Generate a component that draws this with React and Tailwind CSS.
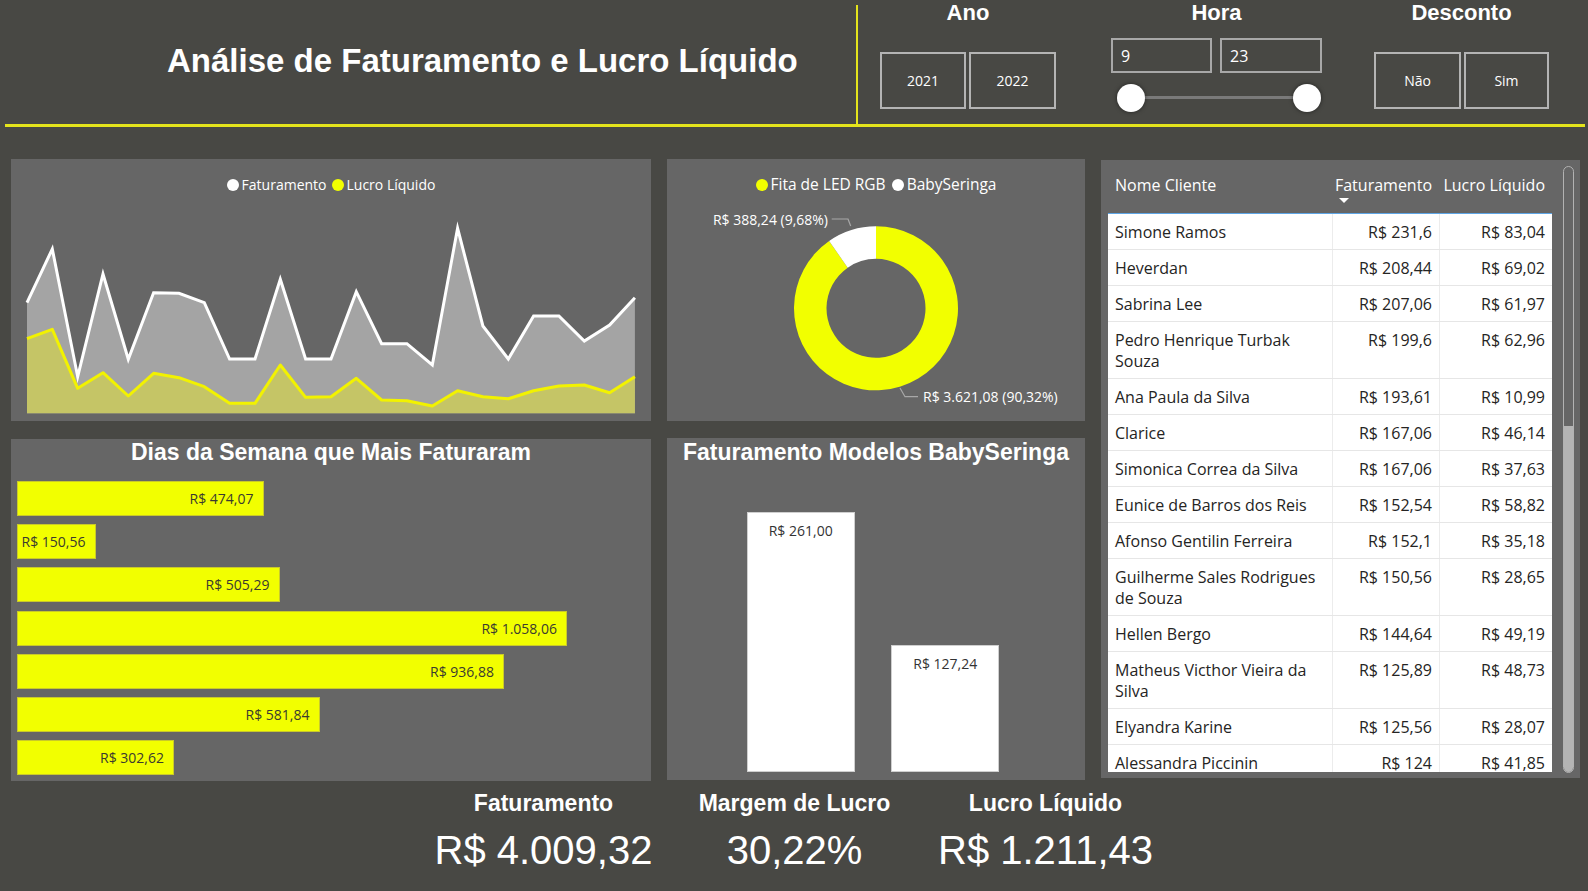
import React from 'react';

const ARIAL = "font-['Liberation_Sans',Arial,sans-serif]";
const UI = "font-['Open_Sans','Noto_Sans',sans-serif]";

// series in page coordinates (y), one point every ~25px
const FAT = [302.7, 249, 376.7, 274, 359.3, 292.7, 293.3, 302.7, 359, 359, 279.3, 359, 359, 291.7, 343.7, 343.7, 365, 228.3, 326, 359, 316, 316, 341, 325, 297.7];
const LUCRO = [338.7, 329.3, 388.3, 372.7, 396, 373.3, 377.7, 386.7, 403.3, 403.3, 365, 397.3, 396.7, 378.3, 400, 400.7, 406, 390.7, 396.7, 398.7, 390.7, 386, 385, 392.7, 376.7];

const DIAS = [
  { w: 246.5, v: 'R$ 474,07' },
  { w: 78.5, v: 'R$ 150,56' },
  { w: 262.5, v: 'R$ 505,29' },
  { w: 550, v: 'R$ 1.058,06' },
  { w: 487, v: 'R$ 936,88' },
  { w: 302.5, v: 'R$ 581,84' },
  { w: 157, v: 'R$ 302,62' }
];

const CLIENTES = [
  ['Simone Ramos', 'R$ 231,6', 'R$ 83,04'],
  ['Heverdan', 'R$ 208,44', 'R$ 69,02'],
  ['Sabrina Lee', 'R$ 207,06', 'R$ 61,97'],
  ['Pedro Henrique Turbak\nSouza', 'R$ 199,6', 'R$ 62,96'],
  ['Ana Paula da Silva', 'R$ 193,61', 'R$ 10,99'],
  ['Clarice', 'R$ 167,06', 'R$ 46,14'],
  ['Simonica Correa da Silva', 'R$ 167,06', 'R$ 37,63'],
  ['Eunice de Barros dos Reis', 'R$ 152,54', 'R$ 58,82'],
  ['Afonso Gentilin Ferreira', 'R$ 152,1', 'R$ 35,18'],
  ['Guilherme Sales Rodrigues\nde Souza', 'R$ 150,56', 'R$ 28,65'],
  ['Hellen Bergo', 'R$ 144,64', 'R$ 49,19'],
  ['Matheus Victhor Vieira da\nSilva', 'R$ 125,89', 'R$ 48,73'],
  ['Elyandra Karine', 'R$ 125,56', 'R$ 28,07'],
  ['Alessandra Piccinin', 'R$ 124', 'R$ 41,85']
];

function AreaChart() {
  const y0 = 193;
  const base = 413.3 - y0;
  const xs = FAT.map((_, i) => 16 + i * 25.33);
  const line = (arr) => arr.map((v, i) => `${i ? 'L' : 'M'}${xs[i].toFixed(1)} ${(v - y0).toFixed(1)}`).join(' ');
  const area = (arr) => `${line(arr)} L${xs[xs.length - 1].toFixed(1)} ${base} L${xs[0]} ${base} Z`;
  return (
    <svg width="640" height="228" viewBox="0 0 640 228" className="block">
      <path d={area(FAT)} fill="#a4a4a4" />
      <path d={area(LUCRO)} fill="#c5c566" />
      <path d={line(FAT)} fill="none" stroke="#ffffff" strokeWidth="3" strokeLinejoin="miter" strokeMiterlimit="6" />
      <path d={line(LUCRO)} fill="none" stroke="#f2f200" strokeWidth="3" strokeLinejoin="round" />
    </svg>
  );
}

function arcPath(cx, cy, r0, r1, a0, a1) {
  const pt = (r, a) => {
    const t = (a * Math.PI) / 180;
    return [cx + r * Math.sin(t), cy - r * Math.cos(t)];
  };
  const large = a1 - a0 > 180 ? 1 : 0;
  const [ox0, oy0] = pt(r1, a0);
  const [ox1, oy1] = pt(r1, a1);
  const [ix1, iy1] = pt(r0, a1);
  const [ix0, iy0] = pt(r0, a0);
  return `M${ox0} ${oy0} A${r1} ${r1} 0 ${large} 1 ${ox1} ${oy1} L${ix1} ${iy1} A${r0} ${r0} 0 ${large} 0 ${ix0} ${iy0} Z`;
}

function Donut() {
  const cx = 209;
  const cy = 109.3;
  const split = 360 - 34.85;
  return (
    <svg width="418" height="222" viewBox="0 0 418 222" className="block">
      <path d={arcPath(cx, cy, 49.5, 82, 0, split)} fill="#f2ff00" />
      <path d={arcPath(cx, cy, 49.5, 82, split, 360)} fill="#ffffff" />
      <polyline points="164.7,20 181,20 183.7,27" fill="none" stroke="#a8a8a8" strokeWidth="1.2" />
      <polyline points="233,189 238,197.7 251,197.7" fill="none" stroke="#a8a8a8" strokeWidth="1.2" />
      <text x="161" y="26" textAnchor="end" fill="#ffffff" fontSize="14" fontFamily="'Open Sans','Noto Sans',sans-serif">
        R$ 388,24 (9,68%)
      </text>
      <text x="256" y="203" fill="#ffffff" fontSize="14" fontFamily="'Open Sans','Noto Sans',sans-serif">
        R$ 3.621,08 (90,32%)
      </text>
    </svg>
  );
}

function FilterLabel({ children }) {
  return <span className={`${ARIAL} mt-[2px] block text-[22px] font-bold leading-none text-white`}>{children}</span>;
}

function SlicerButton({ w, children }) {
  return (
    <div className={`${w} flex h-[57px] items-center justify-center border-2 border-[#b4b4b4] text-[14px] text-white`}>
      {children}
    </div>
  );
}

function Header() {
  return (
    <header className="ml-[5px] flex h-[127px] w-[1580px] border-b-[3px] border-[#e4e41c]">
      <div className="mt-[5px] w-[853px] flex-none border-r-2 border-[#e4e41c] pl-[162px] pt-[39px]">
        <h1 className={`${ARIAL} text-[33px] font-bold leading-none text-white`}>Análise de Faturamento e Lucro Líquido</h1>
      </div>

      <div className={`${UI} flex`}>
        <div className="ml-[22px] flex w-[176px] flex-col items-center">
          <FilterLabel>Ano</FilterLabel>
          <div className="mt-[28px] flex gap-[3px]">
            <SlicerButton w="w-[86px]">2021</SlicerButton>
            <SlicerButton w="w-[87px]">2022</SlicerButton>
          </div>
        </div>

        <div className="ml-[55px] flex w-[211px] flex-col items-center">
          <FilterLabel>Hora</FilterLabel>
          <div className="mt-[14px] flex gap-[8px]">
            <div className="flex h-[35px] w-[101px] items-center border-2 border-[#a8a8a8] pl-[8px] text-[16px] text-white">9</div>
            <div className="flex h-[35px] w-[102px] items-center border-2 border-[#a8a8a8] pl-[8px] text-[16px] text-white">23</div>
          </div>
          <div className="relative ml-[6px] mt-[11px] h-[28px] w-[204px] self-start">
            <div className="absolute left-[14px] right-[14px] top-[12px] h-[3px] bg-[#7a7a7a]" />
            <div className="absolute left-0 top-0 h-[28px] w-[28px] rounded-full bg-white shadow-[0_0_4px_rgba(0,0,0,0.5)]" />
            <div className="absolute right-0 top-0 h-[28px] w-[28px] rounded-full bg-white shadow-[0_0_4px_rgba(0,0,0,0.5)]" />
          </div>
        </div>

        <div className="ml-[52px] flex w-[175px] flex-col items-center">
          <FilterLabel>Desconto</FilterLabel>
          <div className="mt-[28px] flex gap-[3px]">
            <SlicerButton w="w-[87px]">Não</SlicerButton>
            <SlicerButton w="w-[85px]">Sim</SlicerButton>
          </div>
        </div>
      </div>
    </header>
  );
}

function LegendDot({ color }) {
  return <span className={`inline-block h-[12px] w-[12px] rounded-full ${color}`} />;
}

function LinePanel() {
  return (
    <section className="h-[262px] w-[640px] bg-[#666666]">
      <div className={`${UI} flex h-[34px] items-end justify-center text-[14px] leading-[20px] text-white`}>
        <div className="-mb-[2px] flex items-center gap-[3px]">
          <LegendDot color="bg-white" />
          <span>Faturamento</span>
        </div>
        <div className="-mb-[2px] ml-[5px] flex items-center gap-[3px]">
          <LegendDot color="bg-[#f2ff00]" />
          <span>Lucro Líquido</span>
        </div>
      </div>
      <AreaChart />
    </section>
  );
}

function DonutPanel() {
  return (
    <section className="h-[262px] w-[418px] bg-[#666666]">
      <div className={`${UI} flex h-[40px] items-center justify-center pt-[11px] text-[15.5px] text-white`}>
        <div className="flex items-center gap-[3px]">
          <LegendDot color="bg-[#f2ff00]" />
          <span>Fita de LED RGB</span>
        </div>
        <div className="ml-[6px] flex items-center gap-[3px]">
          <LegendDot color="bg-white" />
          <span>BabySeringa</span>
        </div>
      </div>
      <Donut />
    </section>
  );
}

function DiasPanel() {
  return (
    <section className="h-[342px] w-[640px] bg-[#666666] pt-[2px]">
      <h2 className={`${ARIAL} text-center text-[23px] font-bold leading-none text-white`}>Dias da Semana que Mais Faturaram</h2>
      <div className={`${UI} mt-[17px] flex flex-col gap-[8.2px] pl-[6px]`}>
        {DIAS.map((d) => (
          <div
            key={d.v}
            className="flex h-[35px] items-center justify-end border border-[#c9c92a] bg-[#f2ff00] pr-[9px] text-[14px] text-[#3a3a30]"
            style={{ width: d.w }}
          >
            {d.v}
          </div>
        ))}
      </div>
    </section>
  );
}

function ModelosPanel() {
  return (
    <section className="flex h-[342px] w-[418px] flex-col bg-[#666666] pt-[3px]">
      <h2 className={`${ARIAL} text-center text-[23px] font-bold leading-none text-white`}>Faturamento Modelos BabySeringa</h2>
      <div className={`${UI} mt-auto flex items-end gap-[36.6px] pb-[8px] pl-[79.7px] text-[14px] text-[#333333]`}>
        <div className="flex h-[260px] w-[108px] justify-center border border-[#cfcfcf] bg-white pt-[7px]">R$ 261,00</div>
        <div className="flex h-[127px] w-[108px] justify-center border border-[#cfcfcf] bg-white pt-[7px]">R$ 127,24</div>
      </div>
    </section>
  );
}

function TablePanel() {
  return (
    <section className={`${UI} mt-[1px] flex h-[618px] w-[479px] bg-[#666666] pl-[7px]`}>
      <div className="w-[444px]">
        <div className="grid h-[53px] grid-cols-[224px_107px_113px] pt-[14px] text-[16px] leading-[22px] text-white">
          <span className="pl-[7px]">Nome Cliente</span>
          <span className="relative pr-[7px] text-right">
            Faturamento
            <span className="absolute left-[7px] top-[24px] h-0 w-0 border-x-[5px] border-t-[5px] border-x-transparent border-t-white" />
          </span>
          <span className="pr-[7px] text-right">Lucro Líquido</span>
        </div>
        <div className="h-[559px] overflow-hidden border-t border-[#5ea6e6] bg-white text-[16px] leading-[21px] text-[#252423]">
          {CLIENTES.map(([nome, fat, lucro]) => (
            <div key={nome} className="grid grid-cols-[224px_107px_113px] border-b border-[#e6e6e6]">
              <span className="whitespace-pre-line pb-[6px] pl-[7px] pt-[8px]">{nome}</span>
              <span className="border-l border-[#ececec] pb-[6px] pr-[7px] pt-[8px] text-right">{fat}</span>
              <span className="border-l border-[#ececec] pb-[6px] pr-[7px] pt-[8px] text-right">{lucro}</span>
            </div>
          ))}
        </div>
      </div>
      <div className="ml-[11px] mt-[6px] flex h-[607px] w-[11px] flex-col rounded-full border-[1.5px] border-[#b2b2b2]">
        <div className="mt-auto h-[346px] rounded-b-full bg-[#b4b4b4]" />
      </div>
    </section>
  );
}

function Kpi({ label, value }) {
  return (
    <div className={`${ARIAL} flex w-[251px] flex-col items-center text-white`}>
      <span className="text-[23px] font-bold leading-none">{label}</span>
      <span className="mt-[15px] text-[40px] leading-none">{value}</span>
    </div>
  );
}

export default function App() {
  return (
    <div className="h-[891px] w-[1588px] overflow-hidden bg-[#484844]">
      <Header />
      <div className="flex gap-[16px] pl-[11px] pt-[32px]">
        <div className="flex flex-col gap-[18px]">
          <LinePanel />
          <DiasPanel />
        </div>
        <div className="flex flex-col gap-[17px]">
          <DonutPanel />
          <ModelosPanel />
        </div>
        <TablePanel />
      </div>
      <div className="ml-[418px] mt-[11px] flex">
        <Kpi label="Faturamento" value="R$ 4.009,32" />
        <Kpi label="Margem de Lucro" value="30,22%" />
        <Kpi label="Lucro Líquido" value="R$ 1.211,43" />
      </div>
    </div>
  );
}
